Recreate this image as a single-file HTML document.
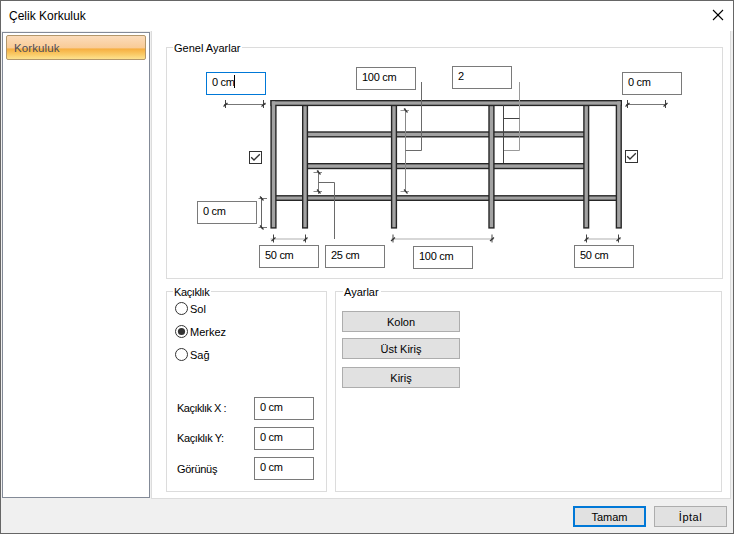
<!DOCTYPE html>
<html><head><meta charset="utf-8">
<style>
html,body{margin:0;padding:0;}
body{width:734px;height:534px;position:relative;overflow:hidden;background:#f0f0f0;font-family:"Liberation Sans", sans-serif;color:#000;}
.a{position:absolute;}
.t{position:absolute;white-space:nowrap;font-size:11px;line-height:13px;}
.tb{position:absolute;box-sizing:border-box;width:60px;height:23px;border:1px solid #7a7a7a;background:#fff;}
.tb span{position:absolute;left:5px;top:3px;font-size:11px;line-height:13px;white-space:nowrap;letter-spacing:-0.3px;}
.btn{position:absolute;box-sizing:border-box;border:1px solid #adadad;background:#e1e1e1;text-align:center;font-size:11px;}
.gb{position:absolute;box-sizing:border-box;border:1px solid #dcdcdc;}
.gbt{position:absolute;background:#fff;font-size:11px;line-height:13px;padding:0 2px 0 1px;white-space:nowrap;}
</style></head><body>
<div class="a" style="left:0;top:0;width:734px;height:534px;box-sizing:border-box;border:1px solid #666;"></div>
<div class="a" style="left:1px;top:1px;width:732px;height:30px;background:#fff;"></div>
<div class="t" style="left:9px;top:8px;font-size:12px;line-height:16px;">Çelik Korkuluk</div>
<div class="a" style="left:2px;top:32px;width:148px;height:466px;box-sizing:border-box;border:1px solid #838a97;background:#fff;"></div>
<div class="a" style="left:6px;top:35px;width:140px;height:25px;box-sizing:border-box;border:1px solid #b3976b;border-radius:2px;background:linear-gradient(#fbdcbb 0%,#f9cb96 52%,#f6ae40 56%,#f9c863 78%,#fde28f 100%);"></div>
<div class="t" style="left:14px;top:42px;color:#4b4b58;font-size:11.5px;letter-spacing:0.1px;">Korkuluk</div>
<div class="a" style="left:151px;top:31px;width:580px;height:468px;box-sizing:border-box;border:1px solid #dcdcdc;border-top:none;background:#fff;"></div>
<div class="gb" style="left:166px;top:47px;width:557px;height:232px;"></div>
<div class="gbt" style="left:173px;top:42px;">Genel Ayarlar</div>
<div class="gb" style="left:166px;top:291px;width:161px;height:201px;"></div>
<div class="gbt" style="left:173px;top:286px;letter-spacing:-0.4px;">Kaçıklık</div>
<div class="gb" style="left:335px;top:291px;width:387px;height:201px;"></div>
<div class="gbt" style="left:343px;top:286px;">Ayarlar</div>
<svg class="a" style="left:0;top:0;" width="734" height="534">
<rect x="302" y="131.3" width="287" height="6.2" fill="#262626"/><rect x="302" y="163" width="287" height="6.2" fill="#262626"/><rect x="273" y="195.1" width="346" height="5.9" fill="#262626"/><rect x="302" y="132.70000000000002" width="287" height="3.4000000000000004" fill="#a2a2a2"/><rect x="302" y="164.4" width="287" height="3.4000000000000004" fill="#a2a2a2"/><rect x="273" y="196.5" width="346" height="3.1000000000000005" fill="#a2a2a2"/><rect x="270.4" y="100" width="351.5" height="6.1" fill="#262626"/><rect x="270.4" y="100" width="6.2" height="128.6" fill="#262626"/><rect x="615.7" y="100" width="6.2" height="128.6" fill="#262626"/><rect x="302" y="105" width="6.1" height="123.6" fill="#262626"/><rect x="390.9" y="105" width="6.2" height="123.6" fill="#262626"/><rect x="488.3" y="105" width="6.3" height="123.6" fill="#262626"/><rect x="583.2" y="105" width="6.1" height="123.6" fill="#262626"/><rect x="271.79999999999995" y="101.4" width="348.7" height="3.3" fill="#a2a2a2"/><rect x="271.79999999999995" y="101.4" width="3.4000000000000004" height="125.8" fill="#a2a2a2"/><rect x="617.1" y="101.4" width="3.4000000000000004" height="125.8" fill="#a2a2a2"/><rect x="303.4" y="106.2" width="3.3" height="121.0" fill="#a2a2a2"/><rect x="392.29999999999995" y="106.2" width="3.4000000000000004" height="121.0" fill="#a2a2a2"/><rect x="489.7" y="106.2" width="3.5" height="121.0" fill="#a2a2a2"/><rect x="584.6" y="106.2" width="3.3" height="121.0" fill="#a2a2a2"/><line x1="224" y1="104.5" x2="265.5" y2="104.5" stroke="#777" stroke-width="1.2"/><line x1="225.5" y1="100.0" x2="225.5" y2="108.0" stroke="#444" stroke-width="1"/><line x1="223.5" y1="106.5" x2="227.5" y2="103.0" stroke="#333" stroke-width="1.2"/><line x1="263.5" y1="100.0" x2="263.5" y2="108.0" stroke="#444" stroke-width="1"/><line x1="261.5" y1="106.5" x2="265.5" y2="103.0" stroke="#333" stroke-width="1.2"/><line x1="626" y1="104.5" x2="666.5" y2="104.5" stroke="#777" stroke-width="1.2"/><line x1="627.5" y1="100.0" x2="627.5" y2="108.0" stroke="#444" stroke-width="1"/><line x1="625.5" y1="106.5" x2="629.5" y2="103.0" stroke="#333" stroke-width="1.2"/><line x1="665.5" y1="100.0" x2="665.5" y2="108.0" stroke="#444" stroke-width="1"/><line x1="663.5" y1="106.5" x2="667.5" y2="103.0" stroke="#333" stroke-width="1.2"/><line x1="261.5" y1="197" x2="261.5" y2="228.5" stroke="#666" stroke-width="1"/><line x1="258.5" y1="198.5" x2="267.0" y2="198.5" stroke="#777" stroke-width="1"/><line x1="260.0" y1="196.5" x2="263.5" y2="200.5" stroke="#333" stroke-width="1.2"/><line x1="258.5" y1="227.5" x2="267.0" y2="227.5" stroke="#777" stroke-width="1"/><line x1="260.0" y1="225.5" x2="263.5" y2="229.5" stroke="#333" stroke-width="1.2"/><line x1="270.5" y1="239" x2="307.5" y2="239" stroke="#b0b0b0" stroke-width="1.2"/><line x1="273.5" y1="234.5" x2="273.5" y2="242.5" stroke="#444" stroke-width="1"/><line x1="271.5" y1="241" x2="275.5" y2="237.5" stroke="#333" stroke-width="1.2"/><line x1="305.5" y1="234.5" x2="305.5" y2="242.5" stroke="#444" stroke-width="1"/><line x1="303.5" y1="241" x2="307.5" y2="237.5" stroke="#333" stroke-width="1.2"/><line x1="391.5" y1="239" x2="494" y2="239" stroke="#b0b0b0" stroke-width="1.2"/><line x1="393" y1="234.5" x2="393" y2="242.5" stroke="#444" stroke-width="1"/><line x1="391" y1="241" x2="395" y2="237.5" stroke="#333" stroke-width="1.2"/><line x1="492" y1="234.5" x2="492" y2="242.5" stroke="#444" stroke-width="1"/><line x1="490" y1="241" x2="494" y2="237.5" stroke="#333" stroke-width="1.2"/><line x1="585" y1="239" x2="621" y2="239" stroke="#b0b0b0" stroke-width="1.2"/><line x1="586.5" y1="234.5" x2="586.5" y2="242.5" stroke="#444" stroke-width="1"/><line x1="584.5" y1="241" x2="588.5" y2="237.5" stroke="#333" stroke-width="1.2"/><line x1="618.5" y1="234.5" x2="618.5" y2="242.5" stroke="#444" stroke-width="1"/><line x1="616.5" y1="241" x2="620.5" y2="237.5" stroke="#333" stroke-width="1.2"/><line x1="405.5" y1="108.5" x2="405.5" y2="192" stroke="#888" stroke-width="1"/><line x1="400.5" y1="110.5" x2="409.0" y2="110.5" stroke="#999" stroke-width="1"/><line x1="404.0" y1="108.5" x2="407.5" y2="112.5" stroke="#333" stroke-width="1.2"/><line x1="400.5" y1="191.5" x2="409.0" y2="191.5" stroke="#999" stroke-width="1"/><line x1="404.0" y1="189.5" x2="407.5" y2="193.5" stroke="#333" stroke-width="1.2"/><line x1="318.5" y1="170.5" x2="318.5" y2="194" stroke="#777" stroke-width="1"/><line x1="313.5" y1="172.5" x2="322.0" y2="172.5" stroke="#888" stroke-width="1"/><line x1="317.0" y1="170.5" x2="320.5" y2="174.5" stroke="#333" stroke-width="1.2"/><line x1="313.5" y1="191.5" x2="322.0" y2="191.5" stroke="#888" stroke-width="1"/><line x1="317.0" y1="189.5" x2="320.5" y2="193.5" stroke="#333" stroke-width="1.2"/><polyline points="421.5,82 421.5,150.5 405.5,150.5" fill="none" stroke="#6a6a6a" stroke-width="1"/><polyline points="318.5,182.5 334.5,182.5 334.5,239" fill="none" stroke="#6a6a6a" stroke-width="1"/><polyline points="519.5,82 519.5,150.5 503.5,150.5" fill="none" stroke="#9a9a9a" stroke-width="1"/><line x1="503.5" y1="118.5" x2="519.5" y2="118.5" stroke="#444" stroke-width="1"/><line x1="503.5" y1="105" x2="503.5" y2="163" stroke="#444" stroke-width="1"/><rect x="249.5" y="151.5" width="12" height="12" fill="#fff" stroke="#333" stroke-width="1"/><polyline points="251.2,157.2 254,160 259.8,154.2" fill="none" stroke="#333" stroke-width="1.3"/><rect x="625.5" y="150.5" width="12" height="12" fill="#fff" stroke="#333" stroke-width="1"/><polyline points="627.2,156.2 630,159 635.8,153.2" fill="none" stroke="#333" stroke-width="1.3"/><circle cx="181.5" cy="308.5" r="6" fill="#fff" stroke="#333" stroke-width="1"/><circle cx="181.5" cy="331.5" r="6" fill="#fff" stroke="#333" stroke-width="1"/><circle cx="181.5" cy="331.5" r="3.6" fill="#333"/><circle cx="181.5" cy="354.5" r="6" fill="#fff" stroke="#333" stroke-width="1"/><line x1="713" y1="10" x2="723" y2="20" stroke="#000" stroke-width="1.1"/><line x1="723" y1="10" x2="713" y2="20" stroke="#000" stroke-width="1.1"/>
</svg>

<div class="tb" style="left:206px;top:72px;border-color:#0078d7;"><span>0 cm<i class="a" style="left:22px;top:-1px;width:1px;height:13px;background:#000;"></i></span></div>
<div class="tb" style="left:356px;top:67px;"><span>100 cm</span></div>
<div class="tb" style="left:452px;top:66px;"><span>2</span></div>
<div class="tb" style="left:622px;top:72px;"><span>0 cm</span></div>
<div class="tb" style="left:197px;top:201px;"><span>0 cm</span></div>
<div class="tb" style="left:259px;top:245px;"><span>50 cm</span></div>
<div class="tb" style="left:325px;top:245px;"><span>25 cm</span></div>
<div class="tb" style="left:413px;top:246px;"><span>100 cm</span></div>
<div class="tb" style="left:574px;top:245px;"><span>50 cm</span></div>
<div class="tb" style="left:254px;top:397px;"><span>0 cm</span></div>
<div class="tb" style="left:254px;top:427px;"><span>0 cm</span></div>
<div class="tb" style="left:254px;top:457px;"><span>0 cm</span></div>
<div class="t" style="left:190px;top:303px;">Sol</div>
<div class="t" style="left:190px;top:326px;">Merkez</div>
<div class="t" style="left:190px;top:349px;">Sağ</div>
<div class="t" style="left:177px;top:402px;letter-spacing:-0.5px;">Kaçıklık X :</div>
<div class="t" style="left:177px;top:432px;letter-spacing:-0.4px;">Kaçıklık Y:</div>
<div class="t" style="left:177px;top:463px;letter-spacing:-0.3px;">Görünüş</div>
<div class="btn" style="left:342px;top:311px;width:118px;height:21px;line-height:21px;">Kolon</div>
<div class="btn" style="left:342px;top:338px;width:118px;height:21px;line-height:21px;">Üst Kiriş</div>
<div class="btn" style="left:342px;top:367px;width:118px;height:21px;line-height:21px;">Kiriş</div>
<div class="btn" style="left:573px;top:506px;width:73px;height:21px;line-height:18px;border:2px solid #0078d7;">Tamam</div>
<div class="btn" style="left:654px;top:506px;width:73px;height:21px;line-height:21px;letter-spacing:0.5px;">İptal</div>
</body></html>
